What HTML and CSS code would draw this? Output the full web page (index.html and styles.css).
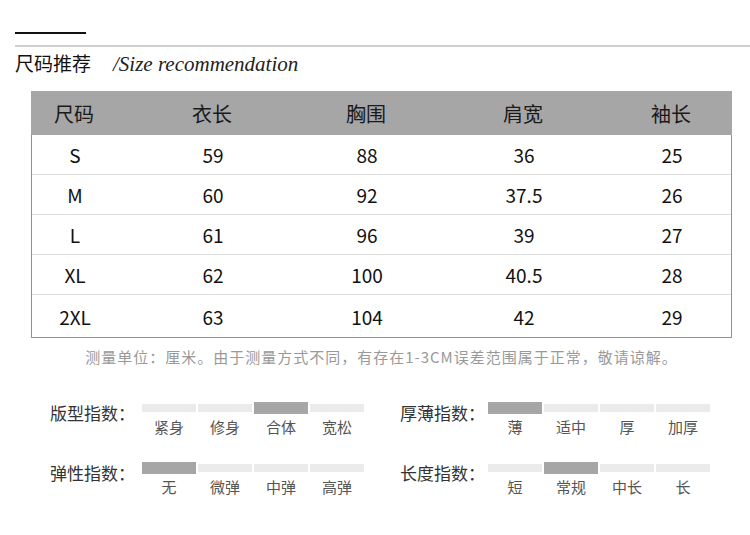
FILE: index.html
```html
<!DOCTYPE html>
<html lang="zh-CN">
<head>
<meta charset="utf-8">
<title>尺码推荐</title>
<link rel="stylesheet" href="styles.css">
</head>
<body>
<div class="page">
  <div class="accent"></div>
  <div class="rule"></div>
  <div class="title">
    <span class="title-cn">尺码推荐</span>
    <span class="title-en">/Size recommendation</span>
  </div>

  <div class="size-table">
    <div class="row head">
      <div>尺码</div><div>衣长</div><div>胸围</div><div>肩宽</div><div>袖长</div>
    </div>
    <div class="body">
      <div class="row"><div>S</div><div>59</div><div>88</div><div>36</div><div>25</div></div>
      <div class="row"><div>M</div><div>60</div><div>92</div><div>37.5</div><div>26</div></div>
      <div class="row"><div>L</div><div>61</div><div>96</div><div>39</div><div>27</div></div>
      <div class="row"><div>XL</div><div>62</div><div>100</div><div>40.5</div><div>28</div></div>
      <div class="row last"><div>2XL</div><div>63</div><div>104</div><div>42</div><div>29</div></div>
    </div>
  </div>

  <p class="note">测量单位：厘米。由于测量方式不同，有存在1-3CM误差范围属于正常，敬请谅解。</p>

  <div class="indexes">
    <div class="group">
      <div class="label">版型指数：</div>
      <div class="scale">
        <div class="cell"><span class="bar"></span><span class="opt">紧身</span></div>
        <div class="cell"><span class="bar"></span><span class="opt">修身</span></div>
        <div class="cell on"><span class="bar"></span><span class="opt">合体</span></div>
        <div class="cell"><span class="bar"></span><span class="opt">宽松</span></div>
      </div>
    </div>
    <div class="group right">
      <div class="label">厚薄指数：</div>
      <div class="scale">
        <div class="cell on"><span class="bar"></span><span class="opt">薄</span></div>
        <div class="cell"><span class="bar"></span><span class="opt">适中</span></div>
        <div class="cell"><span class="bar"></span><span class="opt">厚</span></div>
        <div class="cell"><span class="bar"></span><span class="opt">加厚</span></div>
      </div>
    </div>
    <div class="group">
      <div class="label">弹性指数：</div>
      <div class="scale">
        <div class="cell on"><span class="bar"></span><span class="opt">无</span></div>
        <div class="cell"><span class="bar"></span><span class="opt">微弹</span></div>
        <div class="cell"><span class="bar"></span><span class="opt">中弹</span></div>
        <div class="cell"><span class="bar"></span><span class="opt">高弹</span></div>
      </div>
    </div>
    <div class="group right">
      <div class="label">长度指数：</div>
      <div class="scale">
        <div class="cell"><span class="bar"></span><span class="opt">短</span></div>
        <div class="cell on"><span class="bar"></span><span class="opt">常规</span></div>
        <div class="cell"><span class="bar"></span><span class="opt">中长</span></div>
        <div class="cell"><span class="bar"></span><span class="opt">长</span></div>
      </div>
    </div>
  </div>
</div>
</body>
</html>
```

FILE: styles.css
```css
* { box-sizing: border-box; }
html, body { margin: 0; padding: 0; background: #fff; }
body {
  font-family: "Noto Sans CJK SC", "Noto Sans", sans-serif;
  color: #222;
}
.page { padding-top: 32px; width: 750px; }

.accent { margin-left: 15px; width: 71px; height: 2px; background: #111; }
.rule { margin: 11px 0 0 15px; height: 2px; background: #cfcfcf; }

.title {
  margin: 4px 0 0 15px;
  height: 24px;
  display: flex;
  align-items: baseline;
  line-height: 24px;
}
.title-cn { font-size: 19px; color: #111; }
.title-en {
  margin-left: 22px;
  font-family: "Liberation Serif", serif;
  font-style: italic;
  font-size: 21px;
  color: #222;
}

.size-table { margin: 16px 0 0 31px; width: 701px; }
.row {
  display: grid;
  grid-template-columns: 86px 190px 118px 196px 100px;
  align-items: center;
  text-align: center;
  height: 40px;
  border-bottom: 1px solid #dedede;
  font-size: 19px;
  color: #111;
}
.row.head {
  height: 44px;
  background: #a6a6a6;
  border-bottom: none;
  font-size: 20px;
  color: #1a1a1a;
}
.body {
  border-left: 1px solid #5fa8a6;
  border-right: 1px solid #5fa8a6;
  border-bottom: 1px solid #5fa8a6;
}
.row.last { height: 42px; border-bottom: none; }

.note {
  margin: 9px 0 0 31px;
  width: 701px;
  text-align: center;
  font-size: 15px;
  line-height: 20px;
  letter-spacing: 1px;
  color: #999;
}

.indexes {
  margin: 35px 0 0 50px;
  display: grid;
  grid-template-columns: 350px 350px;
  row-gap: 27px;
}
.group { display: flex; align-items: flex-start; }
.label {
  width: 92px;
  font-size: 17px;
  line-height: 20px;
  margin-top: 1px;
  color: #333;
  white-space: nowrap;
}
.group.right .label { width: 88px; }
.scale { display: flex; }
.cell {
  width: 56px;
  display: flex;
  flex-direction: column;
  align-items: center;
  padding-right: 2px;
}
.bar {
  display: block;
  width: 54px;
  height: 8px;
  margin: 2px 0;
  background: #ebebeb;
}
.cell.on .bar { height: 12px; margin: 0; background: #a6a6a6; }
.opt {
  margin-top: 5px;
  font-size: 15px;
  line-height: 16px;
  color: #555;
}
```
